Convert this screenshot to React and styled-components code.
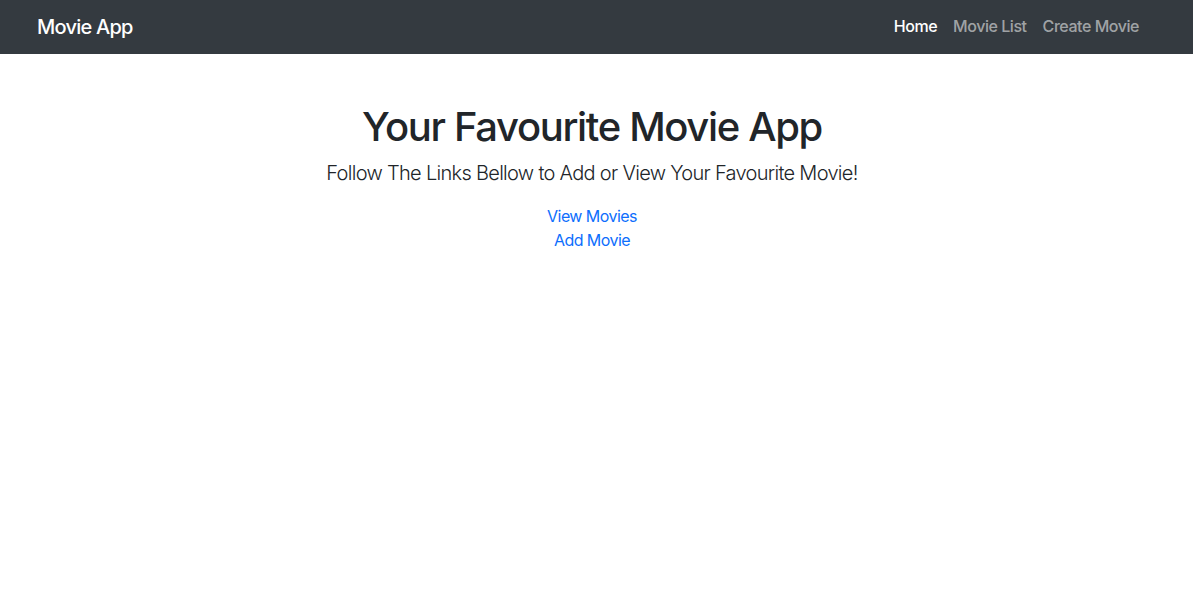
import React from 'react'
import styled, { createGlobalStyle } from 'styled-components'

const GlobalStyle = createGlobalStyle`
    body {
        margin: 0;
        font-family: Inter, "Noto Sans", "Liberation Sans", sans-serif;
        color: #212529;
        background: #fff;
    }
    * { box-sizing: border-box; }
`

const NavBar = styled.nav`
    height: 54px;
    background-color: #343a40;
    display: flex;
    align-items: center;
    justify-content: space-between;
    padding: 0 54px 0 37px;
`

const Brand = styled.a`
    color: #fff;
    font-size: 20px;
    font-weight: 500;
    text-decoration: none;
    letter-spacing: -0.75px;
`

const NavLinks = styled.div`
    display: flex;
    gap: 16px;
    padding-bottom: 2px;
`

const NavLink = styled.a`
    color: ${p => p.active ? '#fff' : 'rgba(255, 255, 255, 0.55)'};
    font-size: 16px;
    font-weight: 500;
    text-decoration: none;
    letter-spacing: -0.45px;
`

const Main = styled.main`
    padding: 49px 9px 0 0;
    text-align: center;
`

const Title = styled.h1`
    margin: 0 0 8px;
    font-size: 40px;
    line-height: 48px;
    font-weight: 500;
    letter-spacing: -1.35px;
`

const Lead = styled.p`
    margin: 0 0 16px;
    font-size: 20px;
    line-height: 28px;
    padding-bottom: 1px;
    font-weight: 300;
    letter-spacing: -0.7px;
`

const LinkList = styled.div`
    display: flex;
    flex-direction: column;
    align-items: center;
`

const TextLink = styled.a`
    color: #0d6efd;
    font-size: 16px;
    line-height: 24px;
    text-decoration: none;
    letter-spacing: -0.55px;
`

const App = () => {
    return (
        <>
            <GlobalStyle />
            <NavBar>
                <Brand href="#">Movie App</Brand>
                <NavLinks>
                    <NavLink href="#" active>Home</NavLink>
                    <NavLink href="#">Movie List</NavLink>
                    <NavLink href="#">Create Movie</NavLink>
                </NavLinks>
            </NavBar>
            <Main>
                <Title>Your Favourite Movie App</Title>
                <Lead>Follow The Links Bellow to Add or View Your Favourite Movie!</Lead>
                <LinkList>
                    <TextLink href="#">View Movies</TextLink>
                    <TextLink href="#">Add Movie</TextLink>
                </LinkList>
            </Main>
        </>
    )
}

export default App
